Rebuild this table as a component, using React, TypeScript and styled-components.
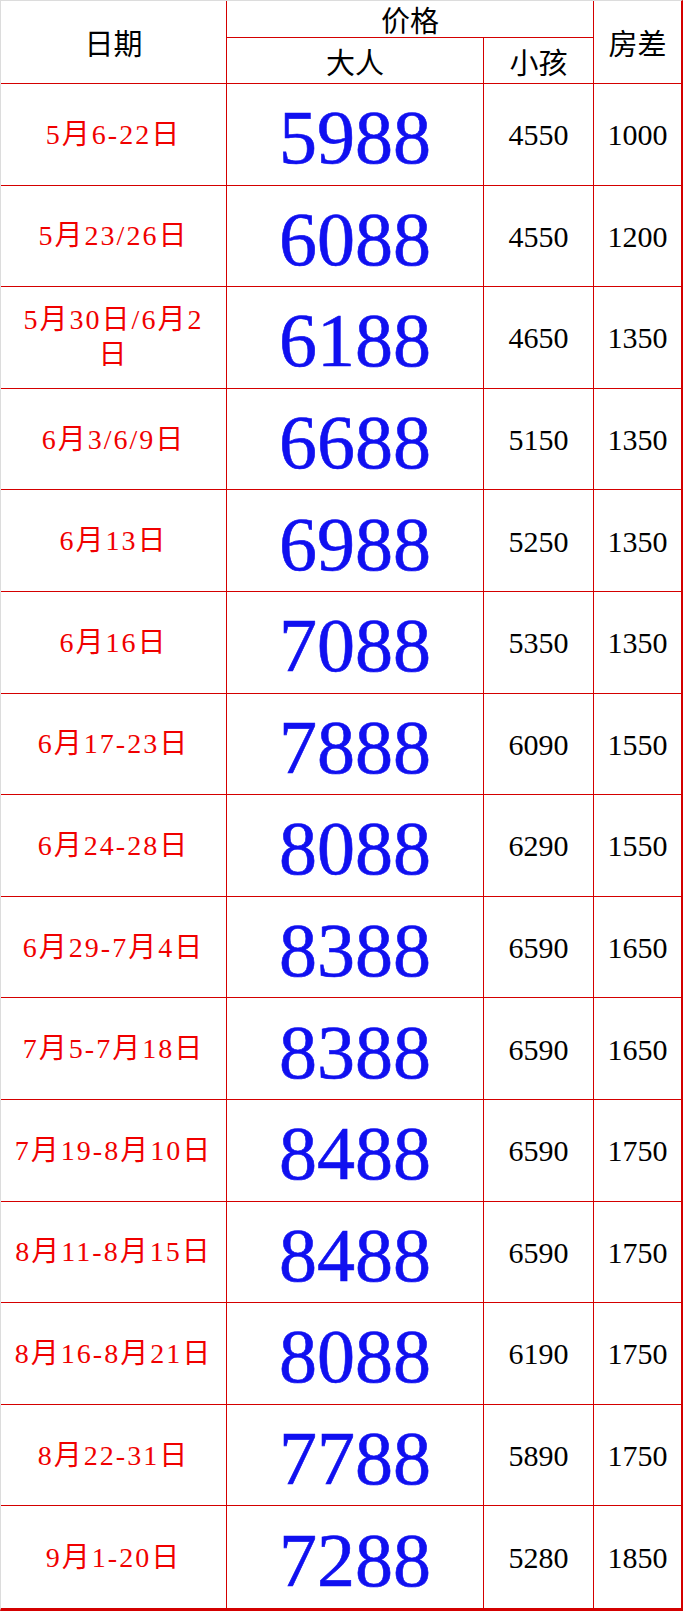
import styled, { createGlobalStyle } from 'styled-components'

const GlobalStyle = createGlobalStyle`
  html, body {
    margin: 0;
    padding: 0;
    background: #ffffff;
  }
  * {
    box-sizing: border-box;
  }
`

const LINE = '#d40000'

const Table = styled.div`
  width: 683px;
  height: 1611px;
  display: grid;
  grid-template-columns: 226px 257px 110px 1fr;
  grid-template-rows: 37px 46px repeat(15, 1fr);
  border-top: 1px solid #dcdcdc;
  border-left: 1px solid #dcdcdc;
  border-right: 2px solid ${LINE};
  border-bottom: 3px solid ${LINE};
  background: #ffffff;
`

const Cell = styled.div<{ $last?: boolean; $bottom?: boolean; $rowSpan?: number; $colSpan?: number }>`
  display: flex;
  align-items: center;
  justify-content: center;
  text-align: center;
  border-right: ${p => (p.$last ? 'none' : `1px solid ${LINE}`)};
  border-bottom: ${p => (p.$bottom ? 'none' : `1px solid ${LINE}`)};
  grid-row: ${p => (p.$rowSpan ? `span ${p.$rowSpan}` : 'auto')};
  grid-column: ${p => (p.$colSpan ? `span ${p.$colSpan}` : 'auto')};
  overflow: hidden;
`

const HeadText = styled.span`
  font-family: "Liberation Serif", "Noto Sans CJK SC", serif;
  font-size: 29px;
  color: #000000;
  letter-spacing: 0;
`

const DateText = styled.span`
  font-family: "Liberation Serif", "Noto Sans CJK SC", serif;
  font-size: 28px;
  line-height: 35px;
  letter-spacing: 2px;
  color: #f00000;
  white-space: pre-line;
`

const PriceText = styled.span`
  font-family: "Liberation Serif", "Times New Roman", serif;
  font-size: 76px;
  line-height: 1;
  color: #1010f0;
  -webkit-text-stroke: 0.6px #1010f0;
  padding-top: 6px;
`

const SmallNum = styled.span`
  font-family: "Liberation Serif", "Times New Roman", serif;
  font-size: 30px;
  color: #000000;
  padding-top: 2px;
`

type Row = {
  date: string
  adult: string
  child: string
  room: string
}

const rows: Row[] = [
  { date: '5月6-22日', adult: '5988', child: '4550', room: '1000' },
  { date: '5月23/26日', adult: '6088', child: '4550', room: '1200' },
  { date: '5月30日/6月2\n日', adult: '6188', child: '4650', room: '1350' },
  { date: '6月3/6/9日', adult: '6688', child: '5150', room: '1350' },
  { date: '6月13日', adult: '6988', child: '5250', room: '1350' },
  { date: '6月16日', adult: '7088', child: '5350', room: '1350' },
  { date: '6月17-23日', adult: '7888', child: '6090', room: '1550' },
  { date: '6月24-28日', adult: '8088', child: '6290', room: '1550' },
  { date: '6月29-7月4日', adult: '8388', child: '6590', room: '1650' },
  { date: '7月5-7月18日', adult: '8388', child: '6590', room: '1650' },
  { date: '7月19-8月10日', adult: '8488', child: '6590', room: '1750' },
  { date: '8月11-8月15日', adult: '8488', child: '6590', room: '1750' },
  { date: '8月16-8月21日', adult: '8088', child: '6190', room: '1750' },
  { date: '8月22-31日', adult: '7788', child: '5890', room: '1750' },
  { date: '9月1-20日', adult: '7288', child: '5280', room: '1850' },
]

const App = () => {
  return (
    <>
      <GlobalStyle />
      <Table>
        <Cell $rowSpan={2}>
          <HeadText>日期</HeadText>
        </Cell>
        <Cell $colSpan={2}>
          <HeadText>价格</HeadText>
        </Cell>
        <Cell $rowSpan={2} $last>
          <HeadText>房差</HeadText>
        </Cell>
        <Cell>
          <HeadText>大人</HeadText>
        </Cell>
        <Cell>
          <HeadText>小孩</HeadText>
        </Cell>

        {rows.map((row, i) => {
          const bottom = i === rows.length - 1
          return [
            <Cell key={`d${i}`} $bottom={bottom}>
              <DateText>{row.date}</DateText>
            </Cell>,
            <Cell key={`a${i}`} $bottom={bottom}>
              <PriceText>{row.adult}</PriceText>
            </Cell>,
            <Cell key={`c${i}`} $bottom={bottom}>
              <SmallNum>{row.child}</SmallNum>
            </Cell>,
            <Cell key={`r${i}`} $bottom={bottom} $last>
              <SmallNum>{row.room}</SmallNum>
            </Cell>,
          ]
        })}
      </Table>
    </>
  )
}

export default App
